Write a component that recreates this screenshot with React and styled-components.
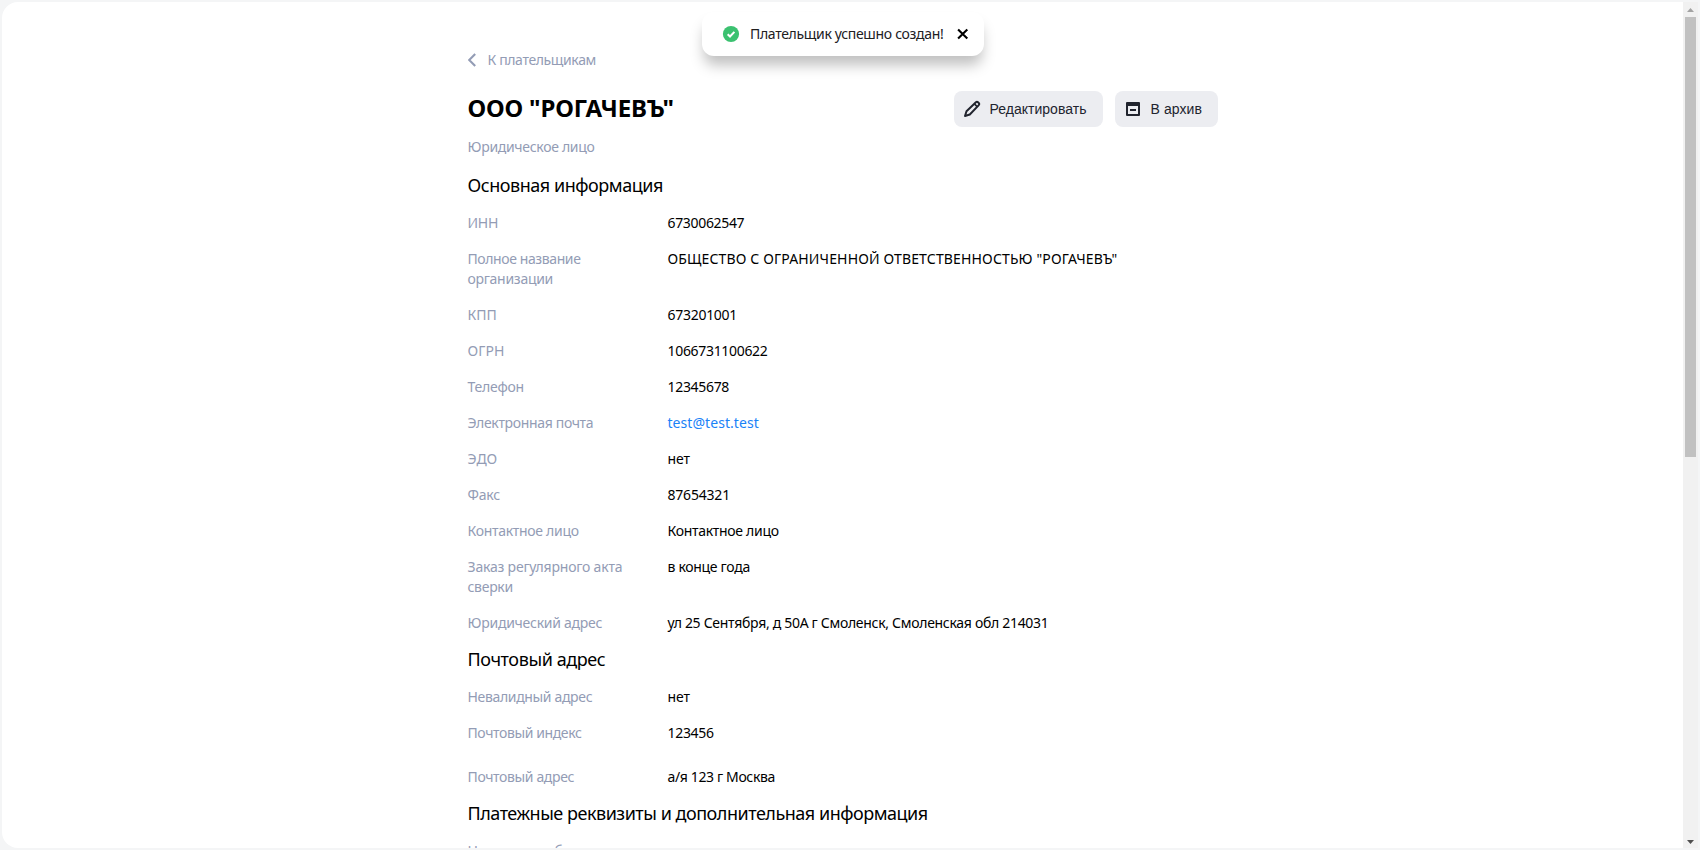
import React from 'react';
import styled, { createGlobalStyle } from 'styled-components';

const Global = createGlobalStyle`
  *, *::before, *::after { box-sizing: border-box; }
  body {
    margin: 0;
    background: #f4f5f6;
    font-family: 'Noto Sans', sans-serif;
    font-size: 14px;
    line-height: 20px;
    color: #000;
  }
`;

const Page = styled.div`
  height: 850px;
  padding: 2px;
  overflow: hidden;
`;

const Panel = styled.div`
  height: 846px;
  display: flex;
  background: #fff;
  border-radius: 16px 0 0 16px;
  overflow: hidden;
`;

const Viewport = styled.main`
  flex: 1;
  display: flex;
  justify-content: center;
  position: relative;
  overflow: hidden;
`;

const Content = styled.div`
  width: 750px;
  padding-top: 48px;
`;

const Text = styled.span`
  white-space: nowrap;
  letter-spacing: ${(p) => p.$track || 0}px;
`;

const BackLink = styled.a`
  display: flex;
  align-items: center;
  gap: 12px;
  height: 20px;
  color: #939cb5;
`;

const Header = styled.header`
  display: flex;
  justify-content: space-between;
  align-items: center;
  height: 36px;
  margin-top: 21px;
`;

const Title = styled.h1`
  margin: 0;
  padding-bottom: 3px;
  font-size: 24px;
  line-height: 32px;
  font-weight: 700;
  letter-spacing: -0.14px;
`;

const Actions = styled.div`
  display: flex;
  gap: 12px;
`;

const Button = styled.button`
  display: flex;
  align-items: center;
  gap: 8px;
  width: ${(p) => p.$width}px;
  height: 36px;
  padding: 0 0 0 8px;
  border: 0;
  border-radius: 8px;
  background: #ecedf1;
  color: #21242e;
  font: 14px/20px 'Liberation Sans', Arial, sans-serif;
`;

const Kind = styled.div`
  margin-top: 10px;
  color: #939cb5;
`;

const Heading = styled.h2`
  margin: ${(p) => (p.$first ? 16 : 14)}px 0 16px;
  font-size: 18px;
  line-height: 24px;
  font-weight: 400;
`;

const List = styled.dl`
  display: flex;
  flex-direction: column;
  gap: 16px;
  margin: 0;
`;

const Row = styled.div`
  display: grid;
  grid-template-columns: 160px 1fr;
  column-gap: 40px;
  margin-top: ${(p) => (p.$spaced ? 8 : 0)}px;
`;

const Label = styled.dt`
  display: flex;
  flex-direction: column;
  color: #939cb5;
`;

const Value = styled.dd`
  margin: 0;
  color: ${(p) => (p.$link ? '#1a82f7' : '#000')};
`;

const Toast = styled.div`
  position: absolute;
  top: 10px;
  left: 700px;
  width: 282px;
  height: 44px;
  padding: 0 14px 0 20px;
  display: flex;
  align-items: center;
  background: #fff;
  border-radius: 12px;
  box-shadow: 0 11px 14px -2px rgba(0, 0, 0, 0.25);
  color: #21201f;
`;

const ToastText = styled.div`
  flex: 1;
  padding-left: 10px;
`;

const Scrollbar = styled.div`
  width: 15px;
  display: flex;
  flex-direction: column;
  align-items: center;
  background: #f1f1f1;
`;

const ScrollArrow = styled.svg`
  display: block;
  flex: none;
`;

const Thumb = styled.div`
  width: 11px;
  height: 440px;
  background: #c1c1c1;
  margin-bottom: auto;
`;

const SECTIONS = [
  {
    title: 'Основная информация',
    track: -0.46,
    rows: [
      { label: [['ИНН', -0.24]], value: ['6730062547', -0.33] },
      {
        label: [['Полное название', -0.4], ['организации', -0.28]],
        value: ['ОБЩЕСТВО С ОГРАНИЧЕННОЙ ОТВЕТСТВЕННОСТЬЮ "РОГАЧЕВЪ"', 0.146],
      },
      { label: [['КПП', 0]], value: ['673201001', -0.28] },
      { label: [['ОГРН', 0.1]], value: ['1066731100622', -0.32] },
      { label: [['Телефон', -0.23]], value: ['12345678', -0.32] },
      { label: [['Электронная почта', -0.34]], value: ['test@test.test', 0.06], link: true },
      { label: [['ЭДО', 0]], value: ['нет', -0.08] },
      { label: [['Факс', -0.2]], value: ['87654321', -0.2] },
      { label: [['Контактное лицо', -0.3]], value: ['Контактное лицо', -0.3] },
      {
        label: [['Заказ регулярного акта', -0.2], ['сверки', -0.29]],
        value: ['в конце года', -0.3],
      },
      {
        label: [['Юридический адрес', -0.263]],
        value: ['ул 25 Сентября, д 50А г Смоленск, Смоленская обл 214031', -0.3],
      },
    ],
  },
  {
    title: 'Почтовый адрес',
    track: -0.41,
    rows: [
      { label: [['Невалидный адрес', -0.34]], value: ['нет', -0.08] },
      { label: [['Почтовый индекс', -0.392]], value: ['123456', -0.308] },
      { label: [['Почтовый адрес', -0.364]], value: ['а/я 123 г Москва', -0.36], spaced: true },
    ],
  },
  {
    title: 'Платежные реквизиты и дополнительная информация',
    track: -0.48,
    rows: [{ label: [['Номер счета банка', -0.25]], value: ['', 0] }],
  },
];

const ChevronIcon = () => (
  <svg width="8" height="14" viewBox="0 0 8 14" fill="none" stroke="#939cb5" strokeWidth="2.1">
    <path d="M7.200 1 1.200 7l6 6" />
  </svg>
);

const PencilIcon = () => (
  <svg width="20" height="20" viewBox="0 0 20 20" fill="none" stroke="#21242e" strokeWidth="2" strokeLinejoin="round">
    <path d="M3 17l1.500-4.800L13.900 3.200a1.500 1.500 0 0 1 2.100 0l.8.8a1.500 1.500 0 0 1 0 2.100L7.800 15.500z" />
    <path d="M12.400 4.900 15.100 7.600" strokeWidth="1.6" />
  </svg>
);

const ArchiveIcon = () => (
  <svg width="20" height="20" viewBox="0 0 20 20">
    <path
      fill="#21242e"
      fillRule="evenodd"
      d="M4 3h12a1 1 0 0 1 1 1v12a1 1 0 0 1-1 1H4a1 1 0 0 1-1-1V4a1 1 0 0 1 1-1zM5 7v8h10V7zM7 10h6v2H7z"
    />
  </svg>
);

const CheckIcon = () => (
  <svg width="18" height="18" viewBox="0 0 18 18" fill="none">
    <circle cx="9" cy="9" r="8.1" fill="#3bc170" />
    <path d="M5.7 9.2 8 11.5l4.4-4.6" stroke="#fff" strokeWidth="2" />
  </svg>
);

const CloseIcon = () => (
  <svg width="14" height="14" viewBox="0 0 14 14" stroke="#000" strokeWidth="2.1">
    <path d="M2.100 2.400l9.200 9.200M11.300 2.400l-9.200 9.200" />
  </svg>
);

export default function App() {
  return (
    <>
      <Global />
      <Page>
        <Panel>
          <Viewport>
            <Content>
              <BackLink>
                <ChevronIcon />
                <Text $track={-0.37}>К плательщикам</Text>
              </BackLink>
              <Header>
                <Title>ООО "РОГАЧЕВЪ"</Title>
                <Actions>
                  <Button $width={149}>
                    <PencilIcon />
                    <Text $track={0.02}>Редактировать</Text>
                  </Button>
                  <Button $width={103}>
                    <ArchiveIcon />
                    <Text $track={0.09}>В архив</Text>
                  </Button>
                </Actions>
              </Header>
              <Kind>
                <Text $track={-0.303}>Юридическое лицо</Text>
              </Kind>
              {SECTIONS.map((section, index) => (
                <section key={section.title}>
                  <Heading $first={index === 0}>
                    <Text $track={section.track}>{section.title}</Text>
                  </Heading>
                  <List>
                    {section.rows.map((row) => (
                      <Row key={row.label[0][0]} $spaced={row.spaced}>
                        <Label>
                          {row.label.map(([text, track]) => (
                            <Text key={text} $track={track}>{text}</Text>
                          ))}
                        </Label>
                        <Value $link={row.link}>
                          <Text $track={row.value[1]}>{row.value[0]}</Text>
                        </Value>
                      </Row>
                    ))}
                  </List>
                </section>
              ))}
            </Content>
            <Toast>
              <CheckIcon />
              <ToastText>
                <Text $track={-0.322}>Плательщик успешно создан!</Text>
              </ToastText>
              <CloseIcon />
            </Toast>
          </Viewport>
          <Scrollbar>
            <ScrollArrow width="15" height="15" viewBox="0 0 15 15">
              <path d="M7.5 6 11 10H4z" fill="#a3a3a3" />
            </ScrollArrow>
            <Thumb />
            <ScrollArrow width="15" height="15" viewBox="0 0 15 15">
              <path d="M4 7h7l-3.500 4z" fill="#505050" />
            </ScrollArrow>
          </Scrollbar>
        </Panel>
      </Page>
    </>
  );
}
